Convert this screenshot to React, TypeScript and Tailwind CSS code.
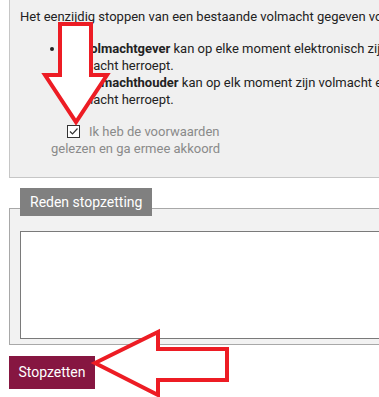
import React from "react";

const Arrows = () => (
  <svg
    className="pointer-events-none absolute left-0 top-0"
    width="379"
    height="397"
    viewBox="0 0 379 397"
  >
    <polygon
      points="60,24 91,24 91,75 107,75 76,122 45,75 60,75"
      fill="#ffffff"
      stroke="#ed1c24"
      strokeWidth="4"
    />
    <polygon
      points="95,363 158,332 158,349 227,349 227,380 158,380 158,395"
      fill="#ffffff"
      stroke="#ed1c24"
      strokeWidth="4"
    />
  </svg>
);

export default function App() {
  return (
    <div className="relative h-[397px] w-[379px] overflow-hidden bg-white font-['Roboto',sans-serif]">
      {/* voorwaarden */}
      <div className="ml-[9px] w-[420px] border-b border-l border-[#c6c6c6] bg-[#f0f0f0] pb-[20px] pl-[10px] pt-[8px] text-[13px] leading-[17px] text-[#222]">
        <p className="whitespace-nowrap">
          Het eenzijdig stoppen van een bestaande volmacht gegeven voor een
          bepaalde periode
        </p>
        <ul className="mt-[15px] list-disc pl-[45px]">
          <li className="whitespace-nowrap">
            De <b>volmachtgever</b> kan op elke moment elektronisch zijn
            <br />
            volmacht herroept.
          </li>
          <li className="whitespace-nowrap">
            De <b>volmachthouder</b> kan op elk moment zijn volmacht elektronisch
            <br />
            volmacht herroept.
          </li>
        </ul>
        <div className="mt-[15px] pl-[31px] text-[13px] text-[#8a8a8a]">
          <div className="flex items-center pl-[16px]">
            <span className="flex h-[13px] w-[13px] items-center justify-center border border-[#333] bg-white">
              <svg width="11" height="11" viewBox="0 0 11 11">
                <path d="M2 5.5 L4.5 8 L9.5 2.5" fill="none" stroke="#333" strokeWidth="1.2" />
              </svg>
            </span>
            <span className="ml-[9px]">Ik heb de voorwaarden</span>
          </div>
          <div>gelezen en ga ermee akkoord</div>
        </div>
      </div>

      {/* reden */}
      <div className="mt-[10px]">
        <div className="relative z-10 ml-[20px] inline-block h-[28px] bg-[#808080] px-[10px] text-[14px] leading-[28px] text-white">
          Reden stopzetting
        </div>
        <div className="-mt-[8px] ml-[9px] w-[420px] border-b border-l border-t border-[#a8a8a8] bg-[#f2f2f2] pb-[5px] pl-[10px] pt-[22px]">
          <textarea className="block h-[108px] w-[400px] resize-none border border-[#7a7a7a] bg-white outline-none" />
        </div>
      </div>

      <button className="ml-[9px] mt-[11px] h-[33px] w-[86px] bg-[#861641] text-[14px] text-white">
        Stopzetten
      </button>

      <Arrows />
    </div>
  );
}
